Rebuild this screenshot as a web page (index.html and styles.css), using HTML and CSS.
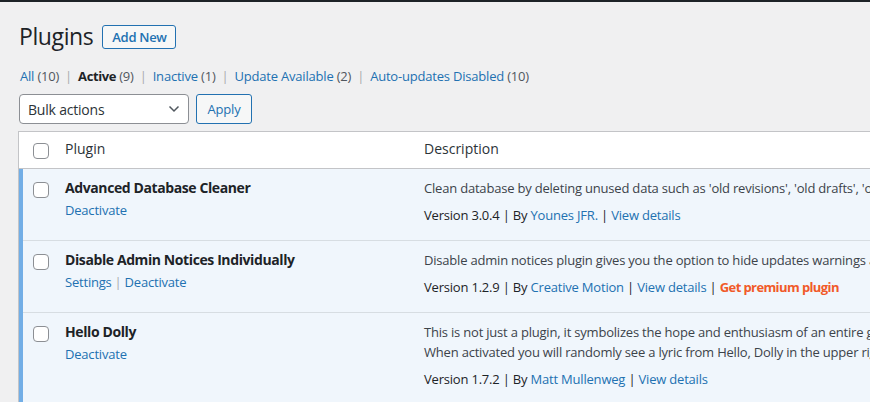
FILE: index.html
```html
<!DOCTYPE html>
<html lang="en">
<head>
<meta charset="utf-8">
<title>Plugins</title>
<link rel="stylesheet" href="styles.css">
</head>
<body>
<div class="adminbar"></div>
<div class="wrap">
  <div class="head">
    <h1 class="title">Plugins</h1>
    <a class="btn-add" href="#">Add New</a>
  </div>
  <ul class="filters">
    <li><a href="#">All</a> <span class="count">(10)</span></li>
    <li class="sep">|</li>
    <li class="current"><b>Active</b> <span class="count">(9)</span></li>
    <li class="sep">|</li>
    <li><a href="#">Inactive</a> <span class="count">(1)</span></li>
    <li class="sep">|</li>
    <li><a href="#">Update Available</a> <span class="count">(2)</span></li>
    <li class="sep">|</li>
    <li><a href="#">Auto-updates Disabled</a> <span class="count">(10)</span></li>
  </ul>
  <div class="tablenav">
    <div class="select">
      <span>Bulk actions</span>
      <svg class="chev" width="12" height="8" viewBox="0 0 12 8"><polyline points="1.5,1.5 6,6 10.5,1.5" fill="none" stroke="#50575e" stroke-width="1.5"/></svg>
    </div>
    <button class="apply">Apply</button>
  </div>
  <div class="plugins">
    <div class="row head-row">
      <div class="cb"><span class="box"></span></div>
      <div class="col-name">Plugin</div>
      <div class="col-desc">Description</div>
    </div>
    <div class="row active">
      <div class="cb"><span class="box"></span></div>
      <div class="col-name">
        <div class="pname">Advanced Database Cleaner</div>
        <div class="actions"><a href="#">Deactivate</a></div>
      </div>
      <div class="col-desc">
        <p class="desc">Clean database by deleting unused data such as 'old revisions', 'old drafts', 'orphan options', etc. Optimize database and repair tables.</p>
        <p class="ver">Version 3.0.4 | By <a href="#">Younes JFR.</a> | <a href="#">View details</a></p>
      </div>
    </div>
    <div class="row active">
      <div class="cb"><span class="box"></span></div>
      <div class="col-name">
        <div class="pname">Disable Admin Notices Individually</div>
        <div class="actions"><a href="#">Settings</a><span class="asep">|</span><a href="#">Deactivate</a></div>
      </div>
      <div class="col-desc">
        <p class="desc">Disable admin notices plugin gives you the option to hide updates warnings and inline notices in the admin panel.</p>
        <p class="ver">Version 1.2.9 | By <a href="#">Creative Motion</a> | <a href="#">View details</a> | <a class="premium" href="#">Get premium plugin</a></p>
      </div>
    </div>
    <div class="row active">
      <div class="cb"><span class="box"></span></div>
      <div class="col-name">
        <div class="pname">Hello Dolly</div>
        <div class="actions"><a href="#">Deactivate</a></div>
      </div>
      <div class="col-desc">
        <p class="desc">This is not just a plugin, it symbolizes the hope and enthusiasm of an entire generation summed up in two words sung most famously by Louis Armstrong: Hello, Dolly.</p>
        <p class="desc">When activated you will randomly see a lyric from Hello, Dolly in the upper right of your admin screen on every page.</p>
        <p class="ver">Version 1.7.2 | By <a href="#">Matt Mullenweg</a> | <a href="#">View details</a></p>
      </div>
    </div>
  </div>
</div>
</body>
</html>
```
FILE: styles.css
```css
html, body {
  overflow: hidden;
}
body {
  margin: 0;
  width: 870px;
  height: 402px;
  background: #f0f0f1;
  font-family: "Open Sans", "Noto Sans", sans-serif;
  font-size: 13px;
  letter-spacing: -0.2px;
  color: #3c434a;
}
a {
  color: #2271b1;
  text-decoration: none;
}
.adminbar {
  height: 2px;
  background: #1d2327;
}
.wrap {
  padding: 20px 0 0 18px;
  width: 1200px;
}
.head {
  display: flex;
  align-items: center;
  gap: 9px;
}
.title {
  margin: 0 0 0 1px;
  font-size: 23px;
  font-weight: 400;
  line-height: 29px;
  letter-spacing: -0.4px;
  color: #1d2327;
}
.btn-add {
  display: inline-block;
  border: 1px solid #2271b1;
  border-radius: 3px;
  background: #f6f7f7;
  padding: 0 8px 0 9px;
  font-size: 13px;
  font-weight: 600;
  line-height: 22px;
  letter-spacing: -0.3px;
  color: #2271b1;
}
.filters {
  display: flex;
  list-style: none;
  margin: 15px 0 0 2px;
  padding: 0;
  line-height: 20px;
  gap: 6px;
  color: #50575e;
}
.filters .current b {
  color: #1d2327;
  font-weight: 700;
  letter-spacing: -0.4px;
}
.filters .sep {
  color: #a7aaad;
}
.tablenav {
  display: flex;
  gap: 7px;
  margin: 8px 0 0 1px;
  height: 30px;
}
.select {
  box-sizing: border-box;
  width: 170px;
  height: 30px;
  border: 1px solid #8c8f94;
  border-radius: 4px;
  background: #fff;
  display: flex;
  align-items: center;
  justify-content: space-between;
  padding: 0 8px 0 8px;
  font-size: 14px;
  color: #2c3338;
}
.apply {
  box-sizing: border-box;
  height: 30px;
  width: 56px;
  border: 1px solid #2271b1;
  border-radius: 3px;
  background: #f6f7f7;
  color: #2271b1;
  font-family: inherit;
  letter-spacing: inherit;
  font-size: 13px;
  padding: 0;
}
.plugins {
  margin-top: 7px;
  border: 1px solid #c3c4c7;
  background: #fff;
  width: 1100px;
}
.row {
  display: grid;
  grid-template-columns: 36px 359px 1fr;
  box-shadow: inset 0 -1px 0 rgba(0, 0, 0, 0.1);
}
.row.active {
  background: #f0f6fc;
}
.head-row {
  box-shadow: none;
  border-bottom: 1px solid #c3c4c7;
  height: 36px;
  font-size: 14px;
  letter-spacing: 0;
  color: #2c3338;
  line-height: 20px;
}
.head-row .col-name,
.head-row .col-desc {
  padding: 7px 10px 9px;
}
.cb {
  padding: 11px 0 0 14px;
}
.active .cb {
  border-left: 4px solid #72aee6;
  padding: 13px 0 0 10px;
}
.box {
  display: block;
  box-sizing: border-box;
  width: 16px;
  height: 16px;
  border: 1px solid #8c8f94;
  border-radius: 4px;
  background: #fff;
}
.active .col-name,
.active .col-desc {
  padding: 9px 10px 16px;
  line-height: 20px;
}
.pname {
  font-size: 14px;
  font-weight: 700;
  letter-spacing: -0.4px;
  color: #1d2327;
}
.actions {
  margin-top: 2px;
}
.asep {
  color: #a7aaad;
  margin: 0 3px;
}
.col-desc {
  white-space: nowrap;
}
.desc {
  margin: 0;
}
.ver {
  margin: 7px 0 0;
  color: #1d2327;
}
.premium {
  color: #f15a29;
  font-weight: 700;
  letter-spacing: -0.6px;
}
```
